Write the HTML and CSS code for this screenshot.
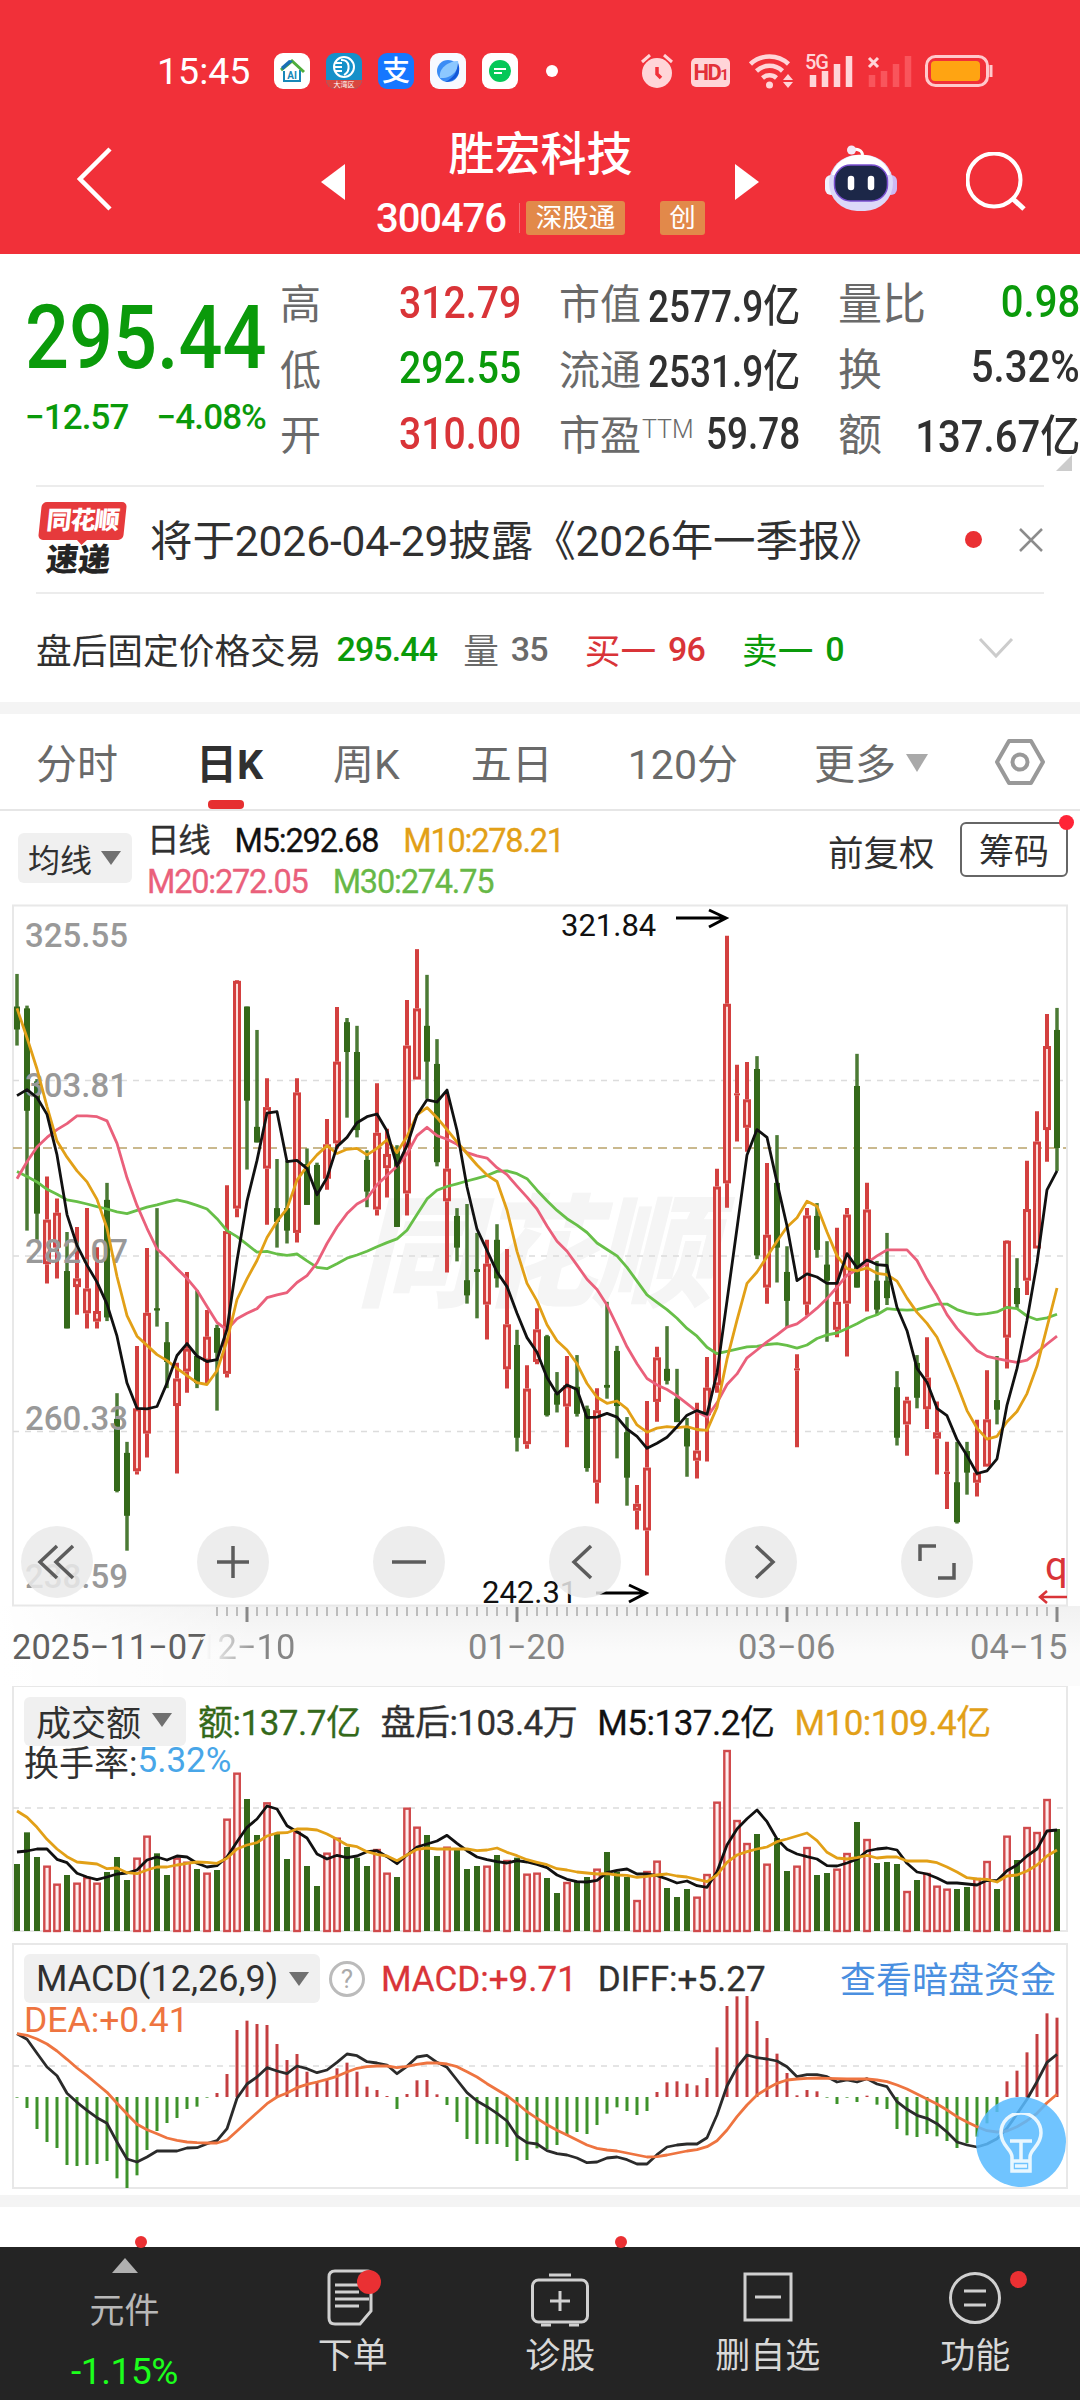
FILE: index.html
```html
<!DOCTYPE html>
<html lang="zh-CN">
<head>
  <meta charset="utf-8">
  <title>胜宏科技 300476</title>
  <link rel="stylesheet" href="styles.css">
</head>
<body>
<header>
  <div class="status">
    <span class="time">15:45</span>
    <svg class="app" width="36" height="36" viewBox="0 0 36 36">
      <rect width="36" height="36" rx="9" fill="#fff"/>
      <path d="M10 18v10h16V17" fill="none" stroke="#1787b8" stroke-width="2"/>
      <path d="M7 17L18 8l12 11" fill="none" stroke="#4fae3c" stroke-width="3"/>
      <path d="M7 14l8-7 4 1-10 9z" fill="#1a6fb5"/>
      <text x="18" y="26" class="app-ai">AI</text>
    </svg>
    <svg class="app" width="36" height="36" viewBox="0 0 36 36">
      <rect width="36" height="36" rx="9" fill="#1590c9"/>
      <path d="M0 27h36a9 9 0 0 1-9 9H9a9 9 0 0 1-9-9z" fill="#d8473f"/>
      <circle cx="18" cy="14" r="10" fill="none" stroke="#fff" stroke-width="2"/>
      <path d="M15 7c9-1 10 11 3 15M9 10h7M8 14h8M9 18h7" fill="none" stroke="#fff" stroke-width="2"/>
      <text x="18" y="34" class="app-tiny">大湾区</text>
    </svg>
    <svg class="app" width="36" height="36" viewBox="0 0 36 36">
      <rect width="36" height="36" rx="9" fill="#1677ff"/>
      <text x="18" y="28" class="app-zhi">支</text>
    </svg>
    <svg class="app" width="36" height="36" viewBox="0 0 36 36">
      <rect width="36" height="36" rx="9" fill="#f7f9ff"/>
      <circle cx="18" cy="18" r="11" fill="#3b8cf5"/>
      <path d="M10 25C8 16 18 8 28 8c2 8-6 18-18 17z" fill="#8cc8ff"/>
      <path d="M28 10c4 10-2 19-13 19 9-4 12-10 13-19z" fill="#1458d8"/>
    </svg>
    <svg class="app" width="36" height="36" viewBox="0 0 36 36">
      <rect width="36" height="36" rx="9" fill="#fff"/>
      <circle cx="18" cy="18" r="11" fill="#05c858"/>
      <path d="M12 16h12M12 20h8" stroke="#fff" stroke-width="2"/>
    </svg>
    <i class="more-dot"></i>
    <svg class="sys alarm" width="32" height="34" viewBox="0 0 32 34">
      <circle cx="16" cy="19" r="15" fill="#ffd5d8"/>
      <path d="M1 8l8-7M31 8l-8-7" stroke="#ffd5d8" stroke-width="3"/>
      <path d="M16 13v7l4 4" fill="none" stroke="#f13039" stroke-width="3.500"/>
    </svg>
    <span class="hd">HD<small>1</small></span>
    <svg class="sys wifi" width="46" height="36" viewBox="0 0 46 36">
      <g fill="none" stroke="#ffd5d8" stroke-width="4.500">
        <path d="M1.500 11a28 28 0 0 1 38 0"/>
        <path d="M7.500 18a19 19 0 0 1 26 0"/>
        <path d="M13.500 25a10.500 10.500 0 0 1 14 0"/>
      </g>
      <circle cx="20.500" cy="32" r="3.500" fill="#ffd5d8"/>
      <path d="M34 27l5-6 5 6zM34 29l5 6 5-6z" fill="#ffd5d8"/>
    </svg>
    <svg class="sys sig" width="48" height="36" viewBox="0 0 48 36">
      <text x="-1" y="16" class="sig-5g">5G</text>
      <path d="M7 22v12M19 18v16M31 11v23M43 3v31" stroke="#ffd5d8" stroke-width="6.500"/>
    </svg>
    <svg class="sys sig2" width="46" height="36" viewBox="0 0 46 36">
      <path d="M2 5l9 9M11 5l-9 9" stroke="#ffd5d8" stroke-width="3"/>
      <path d="M5 22v12M17 18v16M29 11v23M41 3v31" stroke="#f9555c" stroke-width="6.500"/>
    </svg>
    <svg class="sys bat" width="68" height="34" viewBox="0 0 68 34">
      <rect x="1.500" y="2.500" width="61" height="29" rx="9" fill="none" stroke="#ffc9cc" stroke-width="3"/>
      <rect x="6" y="7" width="49" height="20" rx="4" fill="#ffa412"/>
      <path d="M66 11v12" stroke="#ffc9cc" stroke-width="3"/>
    </svg>
  </div>
  <div class="titlebar">
    <svg class="back" width="35" height="64" viewBox="0 0 35 64"><path d="M33 2L3 32l30 30" fill="none" stroke="#fff" stroke-width="4.500"/></svg>
    <svg class="prev" width="24" height="36" viewBox="0 0 24 36"><path d="M24 0v36L0 18z" fill="#fff"/></svg>
    <div class="stock">
      <h1>胜宏科技</h1>
      <div class="code">
        <b>300476</b><i></i><span class="tag">深股通</span><span class="tag tag2">创</span>
      </div>
    </div>
    <svg class="next" width="24" height="36" viewBox="0 0 24 36"><path d="M0 0v36l24-18z" fill="#fff"/></svg>
    <svg class="robot" width="72" height="68" viewBox="0 0 72 68">
      <path d="M37 13c2-7-3-9-9-9" fill="none" stroke="#fff" stroke-width="3"/>
      <circle cx="26.500" cy="5" r="4.500" fill="#f4e9f8"/>
      <rect x="0" y="30" width="12" height="20" rx="6" fill="#f1f2fd"/>
      <rect x="60" y="30" width="12" height="20" rx="6" fill="#cdb9f3"/>
      <rect x="4" y="10" width="64" height="56" rx="28" fill="#dcd8f8"/>
      <path d="M7 30C12 4 58 2 65 30z" fill="#fff"/>
      <rect x="9.500" y="20" width="53" height="36" rx="16" fill="#1c2748" stroke="#7a4fd0" stroke-width="1.500"/>
      <path d="M26 34v8M46 34v8" stroke="#fff" stroke-width="6.500" stroke-linecap="round"/>
    </svg>
    <svg class="search" width="62" height="62" viewBox="0 0 62 62">
      <circle cx="28" cy="28" r="26.500" fill="none" stroke="#fff" stroke-width="4"/>
      <path d="M47 47l11 10" stroke="#fff" stroke-width="5"/>
    </svg>
  </div>
</header>

<section class="quote">
  <div class="price">
    <div class="now">295.44</div>
    <div class="chg"><span>−12.57</span><span>−4.08%</span></div>
  </div>
  <dl>
    <div><dt>高</dt><dd class="red">312.79</dd></div>
    <div><dt>低</dt><dd class="green">292.55</dd></div>
    <div><dt>开</dt><dd class="red">310.00</dd></div>
  </dl>
  <dl class="mid">
    <div><dt>市值</dt><dd>2577.9亿</dd></div>
    <div><dt>流通</dt><dd>2531.9亿</dd></div>
    <div><dt>市盈<sup>TTM</sup></dt><dd>59.78</dd></div>
  </dl>
  <dl class="wide">
    <div><dt>量比</dt><dd class="green">0.98</dd></div>
    <div><dt>换</dt><dd>5.32%</dd></div>
    <div><dt>额</dt><dd>137.67亿</dd></div>
  </dl>
  <i class="corner"></i>
</section>

<section class="news">
  <div class="logo"><span>同花顺</span><b>速递</b></div>
  <p>将于2026-04-29披露《2026年一季报》</p>
  <i class="dot"></i>
  <svg width="26" height="26" viewBox="0 0 26 26"><path d="M2 2l22 22M24 2L2 24" stroke="#8c8c8c" stroke-width="2.500"/></svg>
</section>

<section class="after">
  <span>盘后固定价格交易</span>
  <b class="green a1">295.44</b>
  <span class="gray a2">量</span><b class="gray a3">35</b>
  <span class="red a4">买一</span><b class="red a3">96</b>
  <span class="green a4">卖一</span><b class="green a3">0</b>
  <svg width="36" height="22" viewBox="0 0 36 22"><path d="M2 2l16 17L34 2" fill="none" stroke="#ccc" stroke-width="3"/></svg>
</section>

<nav class="tabs">
  <a>分时</a>
  <a class="on">日K</a>
  <a>周K</a>
  <a>五日</a>
  <a>120分</a>
  <a>更多<i class="tri"></i></a>
  <svg width="50" height="48" viewBox="0 0 50 48">
    <path d="M14 3h22l12 21-12 21H14L2 24z" fill="none" stroke="#999" stroke-width="4" stroke-linejoin="round"/>
    <circle cx="25" cy="24" r="7.500" fill="none" stroke="#999" stroke-width="4"/>
  </svg>
</nav>

<section class="ma">
  <button>均线<i class="tri"></i></button>
  <div class="ma-list">
    <p><span>日线</span><span class="c5">M5:292.68</span><span class="c10">M10:278.21</span></p>
    <p><span class="c20">M20:272.05</span><span class="c30">M30:274.75</span></p>
  </div>
  <span class="fq">前复权</span>
  <span class="chip">筹码<i class="dot"></i></span>
</section>

<section class="chart">
  <svg id="kline" width="1080" height="710"></svg>
  <div class="tools">
    <span><svg width="44" height="44" viewBox="0 0 44 44"><path d="M22 6L5 22l17 16M38 6L21 22l17 16"/></svg></span>
    <span><svg width="44" height="44" viewBox="0 0 44 44"><path d="M22 6v32M6 22h32"/></svg></span>
    <span><svg width="44" height="44" viewBox="0 0 44 44"><path d="M5 22h34"/></svg></span>
    <span><svg width="44" height="44" viewBox="0 0 44 44"><path d="M28 6L11 22l17 16"/></svg></span>
    <span><svg width="44" height="44" viewBox="0 0 44 44"><path d="M17 6l17 16-17 16"/></svg></span>
    <span><svg width="44" height="44" viewBox="0 0 44 44"><path d="M5 21V6h16M39 23v15H23"/></svg></span>
  </div>
</section>

<section class="axis">
  <svg id="ticks" width="1080" height="18"></svg>
  <div class="dates">
    <span class="first">2025−11−07</span><span class="fade">12−10</span><span>01−20</span><span>03−06</span><span>04−15</span>
  </div>
</section>

<section class="sub">
  <svg id="vol" width="1080" height="257"></svg>
  <div class="legend">
    <button>成交额<i class="tri"></i></button>
    <span class="dgreen">额:137.7亿</span><span>盘后:103.4万</span><span class="c5">M5:137.2亿</span><span class="c10">M10:109.4亿</span>
  </div>
  <div class="legend2">换手率:<span>5.32%</span></div>
</section>

<section class="sub macd">
  <svg id="macd" width="1080" height="252"></svg>
  <div class="legend">
    <button>MACD(12,26,9)<i class="tri"></i></button>
    <i class="help">?</i>
    <span class="red">MACD:+9.71</span><span>DIFF:+5.27</span>
    <a>查看暗盘资金</a>
  </div>
  <div class="legend2 dea">DEA:+0.41</div>
  <div class="bulb">
    <svg width="50" height="62" viewBox="0 0 50 62">
      <g fill="none" stroke="#e9f7ff" stroke-width="3.500">
        <path d="M16 44c0-8-11-11-11-24a20 20 0 0 1 40 0c0 13-11 16-11 24v14H16zM16 48h18"/>
        <path d="M14 28h22M25 28v20M19 53h12"/>
      </g>
    </svg>
  </div>
</section>

<section class="peek"><i class="dot"></i><i class="dot"></i></section>

<footer>
  <div class="item idx"><i></i><span>元件</span><b>-1.15%</b></div>
  <div class="item">
    <svg width="60" height="60" viewBox="0 0 60 60">
      <path d="M12 3h32q4 0 4 4v36L37 56H12q-6 0-6-6V9q0-6 6-6z"/>
      <path d="M12 17h24M12 24h24M12 31h34M12 38h24"/>
      <circle class="rd" cx="46" cy="14" r="12"/>
    </svg>
    <span>下单</span>
  </div>
  <div class="item">
    <svg width="60" height="60" viewBox="0 0 60 60">
      <rect x="2.500" y="12" width="55" height="42" rx="6"/>
      <path d="M19 7h22M30 23v20M20 33h20M11 57h10M39 57h10"/>
    </svg>
    <span>诊股</span>
  </div>
  <div class="item">
    <svg width="60" height="60" viewBox="0 0 60 60">
      <rect x="7" y="6" width="46" height="46"/>
      <path d="M17 29h26"/>
    </svg>
    <span>删自选</span>
  </div>
  <div class="item">
    <svg width="60" height="60" viewBox="0 0 60 60">
      <circle cx="30" cy="30" r="24.500"/>
      <path d="M19 23h22M19 37h22"/>
    </svg>
    <span>功能</span><i class="dot"></i>
  </div>
</footer>
<script src="charts.js"></script>
</body>
</html>
```
FILE: styles.css
```css
* {
  box-sizing: border-box;
  margin: 0;
  padding: 0;
}
body {
  width: 1080px;
  height: 2400px;
  overflow: hidden;
  background: #fff;
  color: #303030;
  font-family: Roboto, "Noto Sans CJK SC", sans-serif;
}
svg {
  display: block;
  flex: none;
}
i {
  font-style: normal;
}
span, b, a, dt, dd {
  white-space: nowrap;
}
.red { color: #d93438; }
.green { color: #0a9a0a; }
.gray { color: #6a6a6a; }
.dgreen { color: #34691a; }
.c5 { color: #111; }
.c10 { color: #e2a017; }
.c20 { color: #ea607b; }
.c30 { color: #67b846; }
.dot {
  width: 17px;
  height: 17px;
  border-radius: 50%;
  background: #ea3033;
}
.tri {
  display: inline-block;
  border: 10px solid transparent;
  border-top: 14px solid #707070;
  border-bottom: 0;
}

/* header */
header {
  height: 254px;
  background: #f13039;
  color: #fff;
}
.status {
  display: flex;
  align-items: center;
  height: 100px;
  padding: 42px 0 0 157px;
}
.time {
  width: 101px;
  font-size: 37.500px;
}
.app {
  margin-left: 16px;
}
.app-ai, .app-tiny, .app-zhi {
  text-anchor: middle;
}
.app-ai {
  font-size: 10px;
  font-weight: bold;
  fill: #1787b8;
}
.app-tiny {
  font-size: 7px;
  fill: #fff;
}
.app-zhi {
  font-size: 28px;
  font-weight: 500;
  fill: #fff;
}
.more-dot {
  width: 12px;
  height: 12px;
  margin-left: 28px;
  border-radius: 50%;
  background: #fff;
}
.alarm { margin-left: 83px; }
.hd {
  width: 39px;
  height: 29px;
  margin: 3px 0 0 18px;
  border-radius: 5px;
  background: #ffd5d8;
  color: #e33139;
  font-size: 22px;
  font-weight: bold;
  line-height: 29px;
  text-align: center;
  letter-spacing: -1.5px;
}
.hd small {
  font-size: 15px;
}
.wifi { margin-left: 19px; }
.sig { margin-left: 11px; overflow: visible; }
.sig2 { margin-left: 13px; }
.bat { margin-left: 12px; }
.sig-5g {
  font-size: 20px;
  font-weight: 500;
  letter-spacing: -1px;
  fill: #ffd5d8;
}
.titlebar {
  display: flex;
  height: 154px;
}
.back { margin: 47px 0 0 77px; }
.prev { margin: 64px 0 0 209px; }
.stock {
  width: 329px;
  margin: 20px 0 0 31px;
}
.stock h1 {
  font-size: 46px;
  font-weight: 500;
  line-height: 68px;
  text-align: center;
}
.code {
  display: flex;
  align-items: center;
  height: 60px;
}
.code b {
  width: 143px;
  font-size: 40px;
  font-weight: 500;
  letter-spacing: -1.1px;
}
.code i {
  width: 1px;
  height: 30px;
  margin-right: 6px;
  background: #f56b71;
}
.tag {
  width: 99px;
  height: 34px;
  border-radius: 3px;
  background: #e2894a;
  font-size: 26.500px;
  line-height: 34px;
  text-align: center;
}
.tag2 {
  width: 45px;
  margin-left: 35px;
}
.next { margin: 64px 0 0 30px; }
.robot { margin: 45px 0 0 66px; }
.search { margin: 52px 0 0 69px; }

/* quote */
.quote {
  position: relative;
  display: flex;
  height: 231px;
  padding-top: 16px;
}
.price {
  width: 280px;
  padding-left: 25px;
  color: #0a9a0a;
}
.now {
  width: 280px;
  margin-top: 17px;
  font-size: 89px;
  font-weight: 500;
  line-height: 102px;
  transform: scaleX(0.87);
  transform-origin: left;
}
.chg {
  display: flex;
  justify-content: space-between;
  width: 241px;
  margin-top: 7px;
  font-size: 35px;
  font-weight: 500;
  line-height: 44px;
  letter-spacing: -0.9px;
}
dl {
  width: 241px;
  margin-right: 38px;
}
dl.wide {
  width: 242px;
  margin: 0;
}
dl div {
  display: flex;
  align-items: center;
  justify-content: space-between;
  height: 65.500px;
}
dt {
  margin-top: -3px;
  color: #6a6a6a;
  font-size: 41px;
}
.wide dt {
  font-size: 44px;
}
dt sup {
  margin-left: 1px;
  font-size: 25px;
  font-weight: 300;
  line-height: 1;
  vertical-align: 12px;
}
/* condensed figures */
dd {
  margin-left: -40px;
  font-size: 44px;
  font-weight: 500;
  transform: scaleX(0.89);
  transform-origin: right;
}
.mid dd {
  transform: scaleX(0.84);
}
.wide dd {
  margin-top: -2px;
  transform: scaleX(0.91);
}
.corner {
  position: absolute;
  right: 8px;
  top: 201px;
  border: 8px solid #ccc;
  border-left-color: transparent;
  border-top-color: transparent;
}

/* news */
.news {
  display: flex;
  align-items: center;
  height: 109px;
  margin: 0 36px;
  border-top: 2px solid #ececec;
  border-bottom: 2px solid #ececec;
}
.logo {
  position: relative;
  width: 86px;
  height: 76px;
  margin: 0 27px 0 2px;
  text-align: center;
  transform: skewX(-6deg);
}
.logo span {
  display: block;
  height: 38px;
  border-radius: 5px;
  background: #e63a3c;
  color: #fff;
  font-size: 25px;
  font-weight: 900;
  line-height: 37px;
  letter-spacing: -1px;
}
.logo::after {
  content: "";
  position: absolute;
  left: 38px;
  top: 37px;
  border: 6px solid transparent;
  border-top-color: #e63a3c;
}
.logo b {
  display: block;
  color: #252525;
  font-size: 32px;
  font-weight: 900;
  line-height: 40px;
}
.news p {
  width: 825px;
  margin-top: -4px;
  font-size: 42.500px;
  letter-spacing: -0.1px;
  white-space: nowrap;
}
.news .dot {
  margin-right: 36px;
}

/* after-hours trading */
.after {
  display: flex;
  align-items: center;
  height: 108px;
  padding: 0 36px;
  font-size: 35.700px;
}
.after b {
  margin-top: 2px;
  font-size: 34px;
  font-weight: 500;
  letter-spacing: -0.9px;
}
.after .a1 { margin-left: 15px; }
.after .a2 { margin-left: 26px; }
.after .a3 { margin-left: 12px; }
.after .a4 { margin-left: 37px; }
.after svg {
  margin: 0 30px 0 auto;
}

/* period tabs */
.tabs {
  display: flex;
  align-items: center;
  height: 109px;
  border-top: 12px solid #f4f4f4;
  border-bottom: 2px solid #e6e6e6;
  color: #6a6a6a;
  font-size: 41px;
}
.tabs a {
  position: relative;
  margin-top: -1px;
}
.tabs a:nth-child(1) { margin-left: 36px; }
.tabs a:nth-child(2) { margin-left: 78px; }
.tabs a:nth-child(3) { margin-left: 70px; }
.tabs a:nth-child(4) { margin-left: 71px; }
.tabs a:nth-child(5) { margin-left: 75px; }
.tabs a:nth-child(6) { margin-left: 76px; }
.tabs .on {
  color: #303030;
  font-weight: bold;
}
.tabs .on::after {
  content: "";
  position: absolute;
  left: 12px;
  bottom: -18px;
  width: 36px;
  height: 9px;
  border-radius: 4px;
  background: #e62f30;
}
.tabs .tri {
  margin: 0 0 7px 10px;
  border-width: 18px 11px 0;
  border-top-color: #a9a9a9;
}
.tabs svg {
  margin: 0 35px 0 auto;
}

/* moving averages */
.ma {
  display: flex;
  height: 89px;
}
button {
  display: flex;
  align-items: center;
  border: 0;
  border-radius: 6px;
  background: #f0f0f0;
  color: #303030;
  font: inherit;
  white-space: nowrap;
}
.ma button {
  width: 114px;
  height: 50px;
  margin: 22px 15px 0 18px;
  padding-left: 10px;
  font-size: 32px;
}
.ma button .tri { margin-left: 9px; }
.ma-list {
  width: 681px;
  padding-top: 8px;
}
.ma-list p {
  height: 41px;
  font-size: 32.500px;
  line-height: 44px;
}
.ma-list span {
  margin-right: 25px;
  letter-spacing: -1.2px;
  -webkit-text-stroke: 0.3px;
}
.fq {
  width: 132px;
  margin-top: 18px;
  font-size: 35.500px;
  line-height: 50px;
}
.chip {
  position: relative;
  width: 108px;
  height: 55px;
  margin-top: 11px;
  border: 2px solid #666;
  border-radius: 6px;
  font-size: 35px;
  line-height: 58px;
  text-align: center;
}
.chip .dot {
  position: absolute;
  right: -8px;
  top: -9px;
  width: 15px;
  height: 15px;
  background: #ff2437;
}

/* k-line */
.chart {
  position: relative;
  height: 706px;
}
.chart text {
  font-size: 33px;
}
.chart .lab {
  fill: #999;
  font-weight: 500;
}
.chart .pt {
  fill: #111;
  font-size: 31px;
}
.chart .mark {
  fill: #f5f5f5;
  font-size: 122px;
  font-weight: 900;
  font-style: italic;
}
.chart .q {
  fill: #d93438;
  font-size: 40px;
}
.tools {
  position: absolute;
  left: 21px;
  bottom: 8px;
  display: flex;
  gap: 104px;
}
.tools span {
  display: flex;
  align-items: center;
  justify-content: center;
  width: 72px;
  height: 72px;
  border-radius: 50%;
  background: rgba(234, 234, 234, 0.85);
}
.tools path {
  fill: none;
  stroke: #5c5c5c;
  stroke-width: 3.500;
}

/* date axis */
.axis {
  height: 80px;
  background: linear-gradient(90deg, #fff 0, rgba(255, 255, 255, 0) 260px), linear-gradient(#f1f1f1, #fbfbfb 60%);
}
.dates {
  display: flex;
  height: 58px;
  color: #868686;
  font-size: 34.500px;
  line-height: 46px;
}
.dates span {
  width: 96px;
  margin-right: 174px;
}
.dates .first {
  width: 186px;
  margin: 0 0 0 12px;
  color: #606060;
}
.dates .fade {
  background: linear-gradient(90deg, #f8f8f8 10%, #868686 65%);
  background-clip: text;
  -webkit-background-clip: text;
  color: transparent;
}
.dates span:nth-child(4) { margin-right: 136px; }
.dates span:last-child { margin: 0; }

/* sub charts */
.sub {
  position: relative;
  height: 257px;
  padding-top: 11px;
  font-size: 35px;
}
.sub > svg {
  position: absolute;
  left: 0;
  top: 0;
}
.legend, .legend2 {
  position: relative;
  display: flex;
  align-items: center;
  height: 49px;
  padding-left: 24px;
}
.legend > span {
  margin: -4px 20px 0 0;
  letter-spacing: -0.5px;
  -webkit-text-stroke: 0.3px;
}
.legend button {
  height: 49px;
  width: 162px;
  margin-right: 12px;
  padding: 0 0 3px 12px;
}
.legend .tri { margin-left: 11px; }
.legend2 {
  height: 28px;
}
.legend2 span { color: #48a6e8; }
.macd {
  height: 252px;
}
.macd .legend button {
  width: 296px;
  margin-right: 9px;
  padding: 1px 0 0 12px;
  font-size: 36px;
}
.help {
  width: 36px;
  height: 36px;
  margin-right: 16px;
  border: 3px solid #bbb;
  border-radius: 50%;
  color: #aaa;
  font-size: 26px;
  line-height: 30px;
  text-align: center;
}
.macd .legend > span {
  margin: 1px 21px 0 0;
  letter-spacing: 0;
}
.legend a {
  margin: -3px 24px 0 auto;
  color: #4a8fe0;
  font-size: 36px;
}
.dea {
  height: 33px;
  color: #ee7440;
  font-size: 35.500px;
}
.bulb {
  position: absolute;
  left: 976px;
  top: 154px;
  width: 90px;
  height: 90px;
  padding: 16px 0 0 20px;
  border-radius: 50%;
  background: rgba(88, 186, 255, 0.86);
}
.peek {
  display: flex;
  gap: 468px;
  height: 52px;
  padding: 29px 0 0 135px;
  border-top: 12px solid #f4f4f4;
}
.peek .dot {
  width: 12px;
  height: 12px;
}

/* bottom bar */
footer {
  display: flex;
  height: 153px;
  background: #242424;
  color: #d8d8d8;
}
.item {
  position: relative;
  display: flex;
  flex-direction: column;
  align-items: center;
  width: 207.500px;
  padding-top: 21px;
  font-size: 35px;
  line-height: 50px;
}
.item svg {
  margin-bottom: 4px;
  fill: none;
  stroke: #d0d0d0;
  stroke-width: 3;
}
.item .rd {
  fill: #ea3033;
  stroke: none;
}
.item .dot {
  position: absolute;
  right: 52px;
  top: 24px;
}
.idx {
  width: 249px;
  padding-top: 11px;
}
.idx i {
  border: 13px solid transparent;
  border-top: 0;
  border-bottom: 15px solid #b0b0b0;
}
.idx span {
  margin-top: 14px;
  color: #b8b8b8;
}
.idx b {
  margin-top: 10px;
  color: #1cff1c;
  font-size: 37px;
  font-weight: 400;
  letter-spacing: -0.4px;
}
```
FILE: charts.js
```js
const RED = '#d3403f', GREEN = '#34691a';
const px = i => 17 + i * 10;

// high, body top, body bottom, low, up(1)/down(0)
const candles = [
  [161,232,282,317,0],[230,236,459,720,0],[390,395,683,740,0],[602,696,793,835,1],[650,681,757,824,1],
  [723,808,933,933,0],[712,824,843,903,1],[671,846,900,933,1],[756,895,918,933,1],[616,653,909,917,0],
  [1074,1130,1287,1290,0],[1180,1204,1341,1417,0],[971,1107,1244,1251,1],[758,899,1162,1214,1],[671,889,894,929,0],
  [919,963,1006,1063,0],[1008,1042,1102,1249,1],[810,977,1027,1073,1],[850,993,1052,1063,0],[893,951,1005,1052,1],
  [925,932,986,1112,0],[621,721,1032,1040,1],[174,176,672,691,1],[232,232,437,587,0],[283,494,528,528,0],
  [388,451,585,707,1],[564,671,701,757,0],[568,671,720,748,0],[388,419,725,746,1],[541,575,664,664,0],
  [572,577,707,707,0],[477,532,607,631,1],[233,352,530,541,1],[257,266,331,474,0],[274,331,501,517,0],
  [545,566,635,669,0],[399,507,674,687,1],[498,553,584,648,1],[534,545,712,712,0],[218,317,639,687,1],
  [107,236,391,391,1],[163,274,352,433,0],[303,357,571,580,0],[418,585,656,811,1],[671,688,757,787,0],
  [662,828,861,879,0],[725,804,810,911,0],[740,792,881,957,1],[706,740,824,844,0],[760,924,1022,1064,1],
  [936,969,1171,1201,0],[1013,1064,1185,1195,1],[889,935,1006,1011,1],[947,950,1122,1125,0],[1028,1074,1099,1116,0],
  [993,1057,1103,1192,1],[991,1060,1119,1125,0],[1101,1108,1237,1245,0],[1063,1111,1269,1314,1],[875,1056,1062,1086,0],
  [971,982,1102,1216,0],[1126,1159,1258,1319,0],[1274,1315,1330,1371,1],[1091,1236,1373,1471,1],[973,996,1093,1136,1],
  [928,1021,1047,1055,0],[1021,1086,1137,1137,0],[1128,1150,1190,1256,0],[1095,1199,1221,1260,1],[995,1062,1122,1223,1],
  [585,624,1057,1073,1],[78,226,617,670,1],[359,421,425,526,1],[353,434,496,548,1],[340,368,774,782,0],
  [573,729,844,879,1],[512,616,757,833,0],[754,810,873,932,0],[989,1020,1024,1192,1],[671,687,881,905,1],
  [660,688,762,779,0],[743,794,829,962,0],[714,875,936,952,1],[671,685,879,994,1],[335,405,844,844,0],
  [616,674,790,896,1],[786,829,892,904,0],[725,829,867,882,0],[1026,1061,1171,1188,0],[1082,1090,1142,1210,1],
  [991,1008,1084,1107,0],[952,1040,1109,1152,1],[1092,1159,1173,1251,1],[1180,1245,1250,1326,1],[1180,1268,1355,1358,0],
  [1180,1200,1247,1295,0],[1132,1247,1269,1299,1],[1024,1131,1234,1234,1],[993,1089,1110,1142,0],[741,742,953,1020,1],
  [780,845,880,890,0],[568,673,829,860,1],[460,526,759,759,1],[248,318,501,570,1],[235,283,540,590,0]
];
const m5 = [426,413,430,467,555,685,752,795,832,880,950,1052,1107,1108,1103,1052,992,966,993,1005,1001,935,785,656,567,464,461,570,567,585,642,605,537,517,485,472,466,503,580,535,468,435,440,414,502,625,717,763,810,842,900,953,985,1040,1076,1056,1066,1127,1126,1118,1126,1152,1168,1194,1183,1170,1147,1122,1112,1120,1030,873,715,555,500,517,615,710,829,814,821,835,835,770,801,784,794,796,887,938,1020,1050,1107,1123,1175,1210,1249,1243,1217,1100,1020,915,790,631,590];
const m10 = [236,300,368,450,525,560,590,614,652,715,820,905,950,970,990,1003,1020,1036,1051,1055,1025,960,870,825,785,735,700,672,610,580,555,535,552,543,541,555,541,522,550,515,468,452,474,500,527,552,577,599,613,675,765,835,873,925,960,980,1010,1053,1083,1096,1091,1108,1143,1159,1150,1147,1149,1147,1153,1155,1105,1000,915,835,810,777,743,712,692,656,667,723,775,803,808,801,813,816,830,867,898,922,952,1002,1055,1112,1150,1174,1168,1136,1114,1075,1015,930,845];
const m20 = [607,570,538,517,500,487,470,470,472,481,530,605,665,715,760,780,803,824,850,885,920,936,912,900,890,866,860,855,833,818,790,748,712,683,662,650,620,600,580,553,513,495,513,521,532,550,557,562,583,598,623,647,673,710,743,765,795,826,848,882,927,973,1010,1042,1056,1066,1080,1097,1114,1126,1095,1055,1032,997,980,962,947,930,923,907,889,868,843,817,805,790,775,762,762,762,785,826,862,903,933,957,981,994,999,1003,1007,1002,985,967,950];
const m30 = [591,602,614,630,641,653,657,662,668,673,679,683,676,669,664,658,653,658,665,673,694,720,733,750,767,765,771,774,771,786,800,803,792,780,773,765,755,746,738,719,685,651,632,624,618,612,606,600,591,590,596,607,632,655,676,694,708,724,747,761,775,800,830,860,876,892,911,933,950,974,988,983,978,973,972,968,966,970,976,969,955,947,943,933,923,911,903,890,892,893,892,886,880,880,892,899,903,901,897,887,890,906,914,910,902];

const vols = [792,697,771,797,851,825,848,831,848,816,771,840,773,707,760,825,773,785,807,818,810,656,518,597,705,607,702,777,695,798,858,758,713,741,773,798,747,818,831,623,680,705,768,740,750,807,798,797,765,780,773,821,818,834,879,846,845,831,806,756,815,831,900,813,782,864,891,867,890,822,605,450,660,729,702,791,714,813,797,741,825,819,806,759,666,717,789,786,792,873,840,819,857,866,867,861,834,783,867,707,780,681,696,597,687];
const v5 = [756,753,747,747,778,788,820,831,839,831,822,819,810,780,771,780,768,771,790,801,797,771,725,682,657,618,627,677,695,714,762,777,766,773,768,755,752,770,791,765,741,732,723,706,730,752,771,779,785,789,782,786,793,803,825,838,845,846,841,818,811,807,822,822,827,837,849,843,857,862,815,735,687,656,630,665,717,748,762,770,777,797,798,789,778,753,747,744,750,790,816,822,834,849,849,852,855,841,842,812,795,768,747,693,690];
const v10 = [633,652,682,718,747,770,786,789,792,806,804,818,821,810,801,801,795,790,786,787,790,775,747,735,728,708,699,698,687,687,690,702,718,735,740,755,763,768,782,765,748,744,747,747,747,747,752,750,744,757,767,779,787,794,806,810,816,819,822,821,825,826,832,829,825,822,828,831,838,845,825,787,765,755,747,741,725,717,708,699,722,757,774,777,773,766,774,771,771,783,783,783,788,801,816,833,837,838,846,828,825,813,795,768,750];

const hist = [503,534,597,636,654,705,708,705,702,693,745,774,736,660,603,579,564,537,530,503,489,432,300,272,282,285,342,390,372,425,453,450,415,398,425,470,480,498,537,492,451,450,493,525,576,627,642,642,642,651,693,690,655,657,645,617,606,612,585,551,532,543,555,543,486,457,454,461,466,444,352,228,199,198,273,324,371,429,496,480,484,503,522,503,516,497,524,537,597,616,621,612,619,633,654,640,620,580,546,454,422,367,312,250,263];
const diff = [311,328,370,411,437,490,517,541,563,580,636,687,696,681,663,663,663,654,653,641,632,596,505,462,441,413,423,431,408,416,428,420,397,372,377,395,399,405,431,409,381,376,397,412,450,488,513,530,550,573,618,638,642,662,671,675,684,698,696,684,681,689,702,702,674,651,645,642,642,623,555,468,412,375,383,387,393,410,440,434,434,440,456,450,456,446,462,470,515,538,556,565,581,606,636,645,651,642,626,595,552,508,455,397,373];
const dea = [311,316,327,342,363,388,414,437,462,487,520,552,583,599,611,624,631,636,638,639,639,630,603,575,548,521,501,489,473,463,456,448,439,426,415,410,408,408,413,409,403,399,399,402,410,425,441,461,479,497,520,545,565,584,601,615,630,645,655,660,663,669,675,681,680,675,669,663,659,650,632,600,560,525,495,476,460,450,447,445,444,445,446,447,447,447,450,455,465,477,492,507,522,540,560,576,590,602,606,603,590,572,550,518,493];

const line = (data, y, color, w = 2.8) =>
  `<polyline points="${data.map((v, i) => px(i) + ',' + y(v).toFixed(1)).join(' ')}" fill="none" stroke="${color}" stroke-width="${w}" stroke-linejoin="round"/>`;
const grid = (y, color = '#dcdcdc', dash = '6 6') =>
  `<path d="M13 ${y}H1066" stroke="${color}" stroke-width="1.500" stroke-dasharray="${dash}"/>`;
const frame = (y, h) =>
  `<rect x="13" y="${y}" width="1054" height="${h}" fill="none" stroke="#e8e8e8" stroke-width="2"/>`;

function drawKline() {
  const y = v => v * 0.4592;
  let s = frame(5.5, 700) + '<text class="mark" x="356" y="397" textLength="358">同花顺</text>';
  s += grid(180.500) + grid(356) + grid(531.500) + grid(248, '#b9a36a', '9 6');
  candles.forEach(([h, t, b, l, up], i) => {
    const x = px(i), bt = y(t), bh = Math.max(y(b) - bt, 2);
    if (up) {
      s += `<path d="M${x} ${y(h)}V${bt}M${x} ${bt + bh}V${y(l)}" stroke="${RED}" stroke-width="4"/>`;
      s += bh < 4
        ? `<rect x="${x - 3}" y="${bt}" width="6" height="${bh}" fill="${RED}"/>`
        : `<rect x="${x - 2.5}" y="${bt + 1.5}" width="5" height="${Math.max(bh - 3, 1)}" fill="#fbdedb" stroke="${RED}" stroke-width="3"/>`;
    } else {
      s += `<path d="M${x} ${y(h)}V${y(l)}" stroke="#4b7a35" stroke-width="3.500"/>`;
      s += `<rect x="${x - 3}" y="${bt}" width="6" height="${bh}" fill="${GREEN}"/>`;
    }
  });
  [['325.55', 47], ['303.81', 197], ['282.07', 363], ['260.33', 530], ['238.59', 688]].forEach(([t, ty]) => {
    s += `<text class="lab" x="25" y="${ty}">${t}</text>`;
  });
  s += line(m30, y, '#67bf48') + line(m20, y, '#ea607b') + line(m10, y, '#e2a017') + line(m5, y, '#111');
  s += '<text class="pt" x="561" y="36">321.84</text><path d="M676 18h50M709 10l17 8-17 9" fill="none" stroke="#000" stroke-width="3"/>';
  s += '<text class="pt" x="482" y="703">242.31</text><path d="M596 693h50M629 685l17 8-17 9" fill="none" stroke="#000" stroke-width="3"/>';
  s += '<text class="q" x="1045" y="680">q</text><path d="M1067 697h-27M1047 691l-7 6 7 6" fill="none" stroke="#d93438" stroke-width="2.500"/>';
  document.getElementById('kline').innerHTML = s;
}

function drawTicks() {
  let s = '';
  for (let x = 217; x <= 1057; x += 10) {
    const major = (x - 247) % 270 === 0;
    s += `<path d="M${x} 1V${major ? 16 : 10}" stroke="${major ? '#888' : '#aaa'}" stroke-width="${major ? 3 : 1.5}"/>`;
  }
  document.getElementById('ticks').innerHTML = s;
}

function drawVol() {
  const y = v => v / 3 - 86;
  let s = frame(0, 245) + grid(122);
  vols.forEach((v, i) => {
    const x = px(i), top = y(v), h = 245 - top;
    s += candles[i][4]
      ? `<rect x="${x - 2.7}" y="${top + 1}" width="5.500" height="${h - 1}" fill="#fdeeee" stroke="#d04a4c" stroke-width="2.400"/>`
      : `<rect x="${x - 3}" y="${top}" width="6" height="${h}" fill="${GREEN}"/>`;
  });
  s += line(v5, y, '#111') + line(v10, y, '#e2a017');
  document.getElementById('vol').innerHTML = s;
}

function drawMacd() {
  const y = v => v / 3 - 13;
  let s = frame(1, 244) + grid(123);
  hist.forEach((v, i) => {
    s += `<path d="M${px(i)} 154V${y(v)}" stroke="${v < 501 ? '#c43e40' : '#3d922a'}" stroke-width="3"/>`;
  });
  s += line(diff, y, '#2b2b2b') + line(dea, y, '#ee7440');
  document.getElementById('macd').innerHTML = s;
}

drawKline();
drawTicks();
drawVol();
drawMacd();
```
